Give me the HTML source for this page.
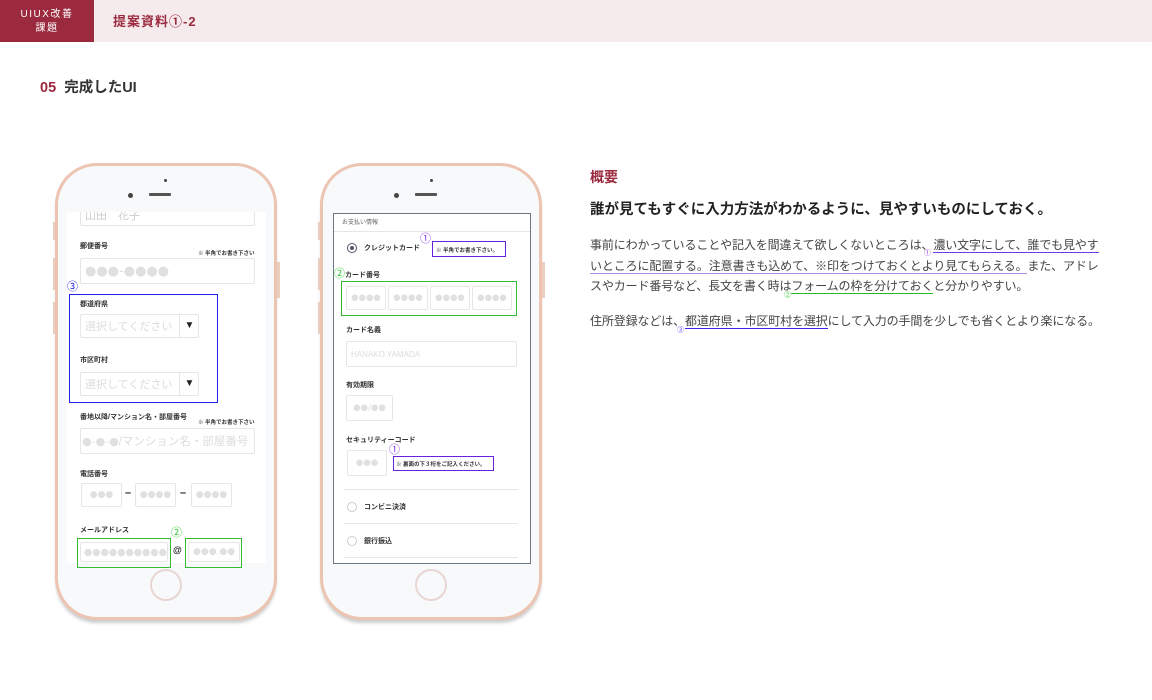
<!DOCTYPE html>
<html><head><meta charset="utf-8"><style>
*{margin:0;padding:0;box-sizing:border-box}
body{width:1152px;height:700px;background:#fff;position:relative;overflow:hidden;font-family:"Liberation Sans","Noto Sans CJK JP",sans-serif;color:#333}
.a{position:absolute;white-space:nowrap}
.phone{position:absolute;width:222px;height:457px;border:3px solid #ecc4b1;border-radius:42px;background:#f8f9fb;box-shadow:0 4px 3px -1px #ccc}
.screen{position:absolute;background:#fff;overflow:hidden}
.lbl{position:absolute;font-size:7px;font-weight:bold;color:#333;white-space:nowrap}
.note{position:absolute;font-size:5.5px;font-weight:bold;color:#333;white-space:nowrap}
.inp{position:absolute;border:1px solid #e6e6e6;border-radius:2px;background:#fff;color:#dcdcdc;font-size:11px;display:flex;align-items:center;padding-left:4px;white-space:nowrap;overflow:hidden}
.d{font-family:"DejaVu Sans",sans-serif;color:#e0e0e0}
.home{position:absolute;width:32px;height:32px;border-radius:50%;border:2px solid #e8d6d2}
.spk{position:absolute;height:3px;width:22px;background:#555;border-radius:1px}
.cam{position:absolute;width:5px;height:5px;background:#444;border-radius:50%}
.side{position:absolute;width:3px;background:#efcfbf}
.u{text-decoration:none;border-bottom:1.5px solid}
</style></head><body>
<div class="a" style="left:0;top:0;width:94px;height:42px;background:#9b2a3e"></div>
<div class="a" style="left:94px;top:0;width:1058px;height:42px;background:#f5eaec"></div>
<div class="a" style="left:0;top:8px;width:94px;text-align:center;color:#fff;font-size:10px;line-height:14px;letter-spacing:1.5px">UIUX改善<br>課題</div>
<div class="a" style="left:113px;top:11px;color:#9b2a3e;font-size:13px;font-weight:bold;letter-spacing:1px">提案資料①-2</div>
<div class="a" style="left:40px;top:76px;font-size:14.5px;font-weight:bold;color:#333"><span style="color:#9b2a3e">05</span>&nbsp;&nbsp;完成したUI</div>

<!-- phone 1 -->
<div class="side" style="left:53px;top:222px;height:18px"></div>
<div class="side" style="left:53px;top:258px;height:32px"></div>
<div class="side" style="left:53px;top:302px;height:32px"></div>
<div class="side" style="left:277px;top:262px;height:36px"></div>
<div class="phone" style="left:55px;top:163px"></div>
<div class="cam" style="left:164px;top:179px;width:3px;height:3px"></div>
<div class="cam" style="left:128px;top:193px"></div>
<div class="spk" style="left:149px;top:193px"></div>
<div class="screen" style="left:67px;top:212px;width:199px;height:351px">
 <div class="inp" style="left:13px;top:-8px;width:175px;height:22px;color:#ccc">山田　花子</div>
 <div class="lbl" style="left:13px;top:29px">郵便番号</div>
 <div class="note" style="left:131px;top:37px">※ 半角でお書き下さい</div>
 <div class="inp d" style="left:13px;top:46px;width:175px;height:26px;font-size:13px">●●●-●●●●</div>
 <div class="lbl" style="left:13px;top:87px">都道府県</div>
 <div class="inp" style="left:13px;top:102px;width:119px;height:24px">選択してください<span style="position:absolute;left:98px;top:0;height:22px;border-left:1px solid #e6e6e6;width:20px;color:#222;font-size:10px;text-align:center;line-height:22px">▼</span></div>
 <div class="lbl" style="left:13px;top:143px">市区町村</div>
 <div class="inp" style="left:13px;top:160px;width:119px;height:24px">選択してください<span style="position:absolute;left:98px;top:0;height:22px;border-left:1px solid #e6e6e6;width:20px;color:#222;font-size:10px;text-align:center;line-height:22px">▼</span></div>
 <div class="lbl" style="left:13px;top:200px">番地以降/マンション名・部屋番号</div>
 <div class="note" style="left:131px;top:206px">※ 半角でお書き下さい</div>
 <div class="inp" style="left:13px;top:216px;width:175px;height:26px;font-size:11.5px;padding-left:1px"><span class="d" style="font-size:11px">●-●-●</span>/マンション名・部屋番号</div>
 <div class="lbl" style="left:13px;top:257px">電話番号</div>
 <div class="inp d" style="left:14px;top:271px;width:41px;height:24px;font-size:9px;justify-content:center;padding:0">●●●</div>
 <div class="a" style="left:58px;top:275px;font-size:11px;color:#222;font-weight:bold">–</div>
 <div class="inp d" style="left:68px;top:271px;width:41px;height:24px;font-size:9px;justify-content:center;padding:0">●●●●</div>
 <div class="a" style="left:113px;top:275px;font-size:11px;color:#222;font-weight:bold">–</div>
 <div class="inp d" style="left:124px;top:271px;width:41px;height:24px;font-size:9px;justify-content:center;padding:0">●●●●</div>
 <div class="lbl" style="left:13px;top:313px">メールアドレス</div>
 <div class="inp d" style="left:13px;top:330px;width:88px;height:20px;font-size:9.5px;padding-left:3px">●●●●●●●●●●</div>
 <div class="a" style="left:106px;top:333px;font-size:9px;font-weight:bold;color:#222">@</div>
 <div class="inp d" style="left:121px;top:330px;width:52px;height:20px;font-size:9px;padding-left:4px">●●●.●●</div>
</div>
<div class="a" style="left:67px;top:278px;color:#2222ee;font-size:11px">③</div>
<div class="a" style="left:69px;top:294px;width:149px;height:109px;border:1px solid #2222ee"></div>
<div class="a" style="left:171px;top:524px;color:#33cc33;font-size:11px">②</div>
<div class="a" style="left:77px;top:538px;width:94px;height:30px;border:1px solid #33bb33"></div>
<div class="a" style="left:185px;top:538px;width:57px;height:30px;border:1px solid #33bb33"></div>
<div class="home" style="left:150px;top:569px"></div>

<!-- phone 2 -->
<div class="side" style="left:318px;top:222px;height:18px"></div>
<div class="side" style="left:318px;top:258px;height:32px"></div>
<div class="side" style="left:318px;top:302px;height:32px"></div>
<div class="side" style="left:542px;top:262px;height:36px"></div>
<div class="phone" style="left:320px;top:163px"></div>
<div class="cam" style="left:430px;top:179px;width:3px;height:3px"></div>
<div class="cam" style="left:394px;top:193px"></div>
<div class="spk" style="left:415px;top:193px"></div>
<div class="screen" style="left:333px;top:213px;width:198px;height:351px;border:1px solid #6b7785">
 <div class="a" style="left:8px;top:3px;font-size:6px;color:#666">お支払い情報</div>
 <div class="a" style="left:0;top:17px;width:196px;border-top:1px solid #e6e6e6"></div>
 <div class="a" style="left:13px;top:29px;width:10px;height:10px;border-radius:50%;border:1px solid #556;background:#fff"><div style="margin:2px;width:4px;height:4px;border-radius:50%;background:#556"></div></div>
 <div class="lbl" style="left:30px;top:29px">クレジットカード</div>
 <div class="lbl" style="left:11px;top:56px">カード番号</div>
 <div class="inp d" style="left:12px;top:72px;width:40px;height:24px;font-size:8.5px;justify-content:center;padding:0">●●●●</div>
 <div class="inp d" style="left:54px;top:72px;width:40px;height:24px;font-size:8.5px;justify-content:center;padding:0">●●●●</div>
 <div class="inp d" style="left:96px;top:72px;width:40px;height:24px;font-size:8.5px;justify-content:center;padding:0">●●●●</div>
 <div class="inp d" style="left:138px;top:72px;width:40px;height:24px;font-size:8.5px;justify-content:center;padding:0">●●●●</div>
 <div class="lbl" style="left:12px;top:111px">カード名義</div>
 <div class="inp" style="left:12px;top:127px;width:171px;height:26px;font-size:8px">HANAKO YAMADA</div>
 <div class="lbl" style="left:12px;top:166px">有効期限</div>
 <div class="inp d" style="left:12px;top:181px;width:47px;height:26px;font-size:8.5px;justify-content:center;padding:0">●●/●●</div>
 <div class="lbl" style="left:12px;top:221px">セキュリティーコード</div>
 <div class="inp d" style="left:13px;top:236px;width:40px;height:26px;font-size:8.5px;justify-content:center;padding:0">●●●</div>
 <div class="a" style="left:10px;top:275px;width:174px;border-top:1px solid #e6e6e6"></div>
 <div class="a" style="left:13px;top:288px;width:10px;height:10px;border-radius:50%;border:1px solid #ccc"></div>
 <div class="lbl" style="left:30px;top:288px">コンビニ決済</div>
 <div class="a" style="left:10px;top:309px;width:174px;border-top:1px solid #e6e6e6"></div>
 <div class="a" style="left:13px;top:322px;width:10px;height:10px;border-radius:50%;border:1px solid #ccc"></div>
 <div class="lbl" style="left:30px;top:322px">銀行振込</div>
 <div class="a" style="left:10px;top:343px;width:174px;border-top:1px solid #e6e6e6"></div>
</div>
<div class="a" style="left:420px;top:230px;color:#8833ee;font-size:11px">①</div>
<div class="a" style="left:432px;top:241px;width:74px;height:16px;border:1px solid #6622dd;font-size:5.5px;font-weight:bold;padding:4px 0 0 3px;color:#333">※ 半角でお書き下さい。</div>
<div class="a" style="left:334px;top:265px;color:#33cc33;font-size:11px">②</div>
<div class="a" style="left:341px;top:281px;width:176px;height:35px;border:1px solid #33bb33"></div>
<div class="a" style="left:389px;top:441px;color:#8833ee;font-size:11px">①</div>
<div class="a" style="left:393px;top:456px;width:101px;height:15px;border:1px solid #6622dd;font-size:5.5px;font-weight:bold;padding:3px 0 0 2px;color:#333">※ 裏面の下３桁をご記入ください。</div>
<div class="home" style="left:415px;top:569px"></div>

<!-- right text -->
<div class="a" style="left:590px;top:167px;font-size:14px;color:#9b2a3e;font-weight:bold">概要</div>
<div class="a" style="left:590px;top:198px;font-size:14.5px;font-weight:bold;color:#222">誰が見てもすぐに入力方法がわかるように、見やすいものにしておく。</div>
<div class="a" style="left:590px;top:235px;font-size:12px;line-height:20.5px;color:#444;letter-spacing:-0.12px">事前にわかっていることや記入を間違えて欲しくないところは、<span class="u" style="border-color:#6a3ae8">濃い文字にして、誰でも見やす</span><br><span class="u" style="border-color:#b68ae8">いところに配置する。注意書きも込めて、※印をつけておくとより見てもらえる。</span>また、アドレ<br>スやカード番号など、長文を書く時は<span class="u" style="border-color:#22bb22">フォームの枠を分けておく</span>と分かりやすい。</div>
<div class="a" style="left:590px;top:311px;font-size:12px;line-height:20.5px;color:#444;letter-spacing:-0.12px">住所登録などは、<span class="u" style="border-color:#4422ee">都道府県・市区町村を選択</span>にして入力の手間を少しでも省くとより楽になる。</div>
<div class="a" style="left:924px;top:248px;font-size:7px;color:#8833ee">①</div>
<div class="a" style="left:784px;top:290px;font-size:7px;color:#33cc33">②</div>
<div class="a" style="left:677px;top:325px;font-size:7px;color:#6644ee">③</div>
</body></html>
